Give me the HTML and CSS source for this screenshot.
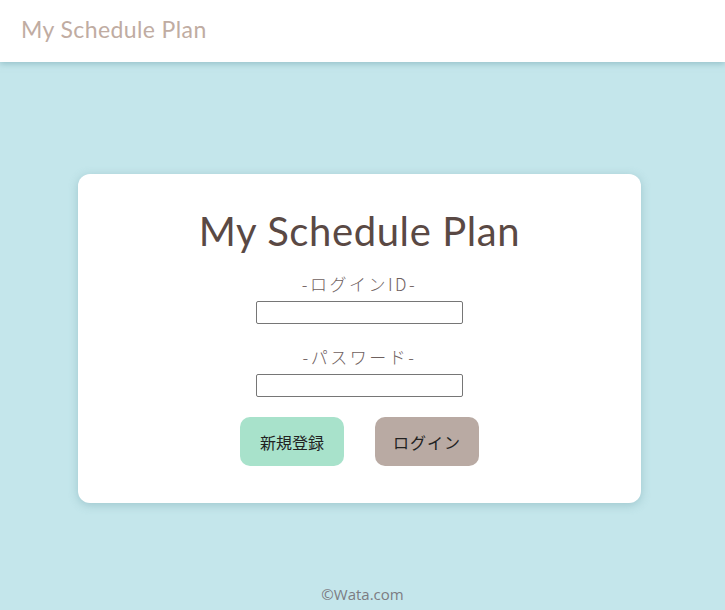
FILE: index.html
```html
<!DOCTYPE html>
<html lang="ja">
<head>
<meta charset="utf-8">
<title>My Schedule Plan</title>
<link rel="stylesheet" href="styles.css">
</head>
<body>
<header class="topbar">
  <div class="brand">My Schedule Plan</div>
</header>
<main class="main">
  <section class="card">
    <h1 class="title">My Schedule Plan</h1>
    <form class="form">
      <label class="field">
        <span class="label">-ログインID-</span>
        <input class="input" type="text">
      </label>
      <label class="field">
        <span class="label">-パスワード-</span>
        <input class="input" type="password">
      </label>
      <div class="actions">
        <button type="button" class="btn btn-register">新規登録</button>
        <button type="button" class="btn btn-login">ログイン</button>
      </div>
    </form>
  </section>
</main>
<footer class="footer">©Wata.com</footer>
</body>
</html>
```
FILE: styles.css
```css
* { box-sizing: border-box; }
html, body { height: 100%; }
body {
  margin: 0;
  background: #c4e6eb;
  font-family: "Noto Sans CJK JP", "Noto Sans", sans-serif;
  display: flex;
  flex-direction: column;
}
.topbar {
  height: 62px;
  background: #fff;
  display: flex;
  align-items: center;
  padding-left: 21px;
  box-shadow: 0 2px 6px rgba(120, 170, 178, 0.6);
  position: relative;
  z-index: 1;
}
.brand {
  font-family: "Lato", "Open Sans", sans-serif;
  font-size: 23px;
  line-height: 28px;
  margin-top: -4px;
  color: #c0aca2;
  letter-spacing: 0.4px;
}
.main {
  flex: 1;
  display: flex;
  justify-content: center;
  padding-top: 112px;
  padding-right: 6px;
}
.card {
  width: 563px;
  height: 329px;
  background: #fff;
  border-radius: 12px;
  box-shadow: 0 2px 10px rgba(110, 160, 168, 0.45);
  display: flex;
  flex-direction: column;
  align-items: center;
  padding-top: 33px;
}
.title {
  margin: 0;
  font-family: "Lato", "Open Sans", sans-serif;
  font-weight: 400;
  font-size: 40px;
  line-height: 48px;
  letter-spacing: 0.6px;
  color: #5a4944;
}
.form {
  display: flex;
  flex-direction: column;
  align-items: center;
  margin-top: 17px;
}
.field {
  display: flex;
  flex-direction: column;
  align-items: center;
  margin-bottom: 21px;
}
.label {
  font-size: 17px;
  font-weight: 300;
  line-height: 24px;
  letter-spacing: 2.5px;
  color: #6e605e;
  margin-bottom: 5px;
}
.input {
  width: 207px;
  height: 23px;
  border: 1px solid #767676;
  border-radius: 2px;
  background: #fff;
}
.actions {
  display: flex;
  gap: 31px;
  margin-top: -1px;
}
.btn {
  width: 104px;
  height: 49px;
  border: none;
  border-radius: 10px;
  font-family: "Noto Sans CJK JP", sans-serif;
  font-size: 16px;
  color: #222;
}
.btn-register { background: #a8e2cb; }
.btn-login { background: #b9aaa3; letter-spacing: 1px; }
.footer {
  text-align: center;
  font-family: "Open Sans", sans-serif;
  font-size: 15px;
  color: #7c7c82;
  padding-bottom: 6px;
}
```
